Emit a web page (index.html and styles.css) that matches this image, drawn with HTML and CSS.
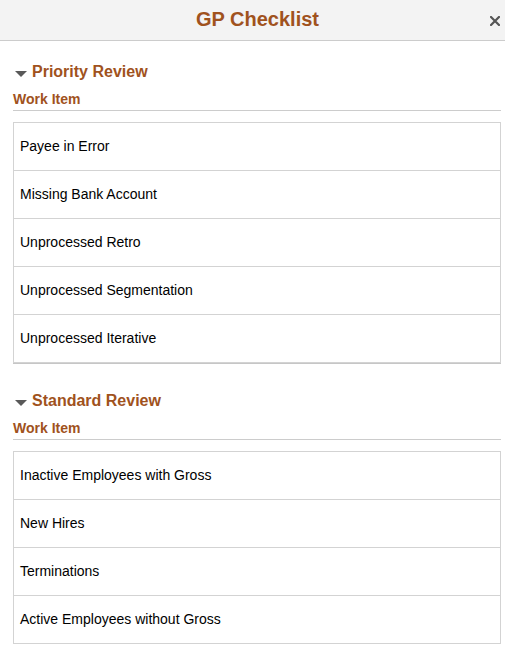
FILE: index.html
```html
<!DOCTYPE html>
<html lang="en">
<head>
<meta charset="utf-8">
<title>GP Checklist</title>
<link rel="stylesheet" href="styles.css">
</head>
<body>
<header class="bar">
  <h1 class="bar-title">GP Checklist</h1>
  <button class="close" aria-label="Close">
    <svg width="10" height="10" viewBox="0 0 10 10"><path d="M1 1 L9 9 M9 1 L1 9" stroke="#555" stroke-width="2.2" stroke-linecap="square" fill="none"/></svg>
  </button>
</header>
<main class="content">
  <section class="group">
    <h2 class="group-head"><svg class="caret" width="12" height="6" viewBox="0 0 12 6"><path d="M0 0 H12 L6 6 Z" fill="#595959"/></svg><span>Priority Review</span></h2>
    <div class="col-head">Work Item</div>
    <ul class="list">
      <li class="row">Payee in Error</li>
      <li class="row">Missing Bank Account</li>
      <li class="row">Unprocessed Retro</li>
      <li class="row">Unprocessed Segmentation</li>
      <li class="row">Unprocessed Iterative</li>
    </ul>
  </section>
  <section class="group group-next">
    <h2 class="group-head"><svg class="caret" width="12" height="6" viewBox="0 0 12 6"><path d="M0 0 H12 L6 6 Z" fill="#595959"/></svg><span>Standard Review</span></h2>
    <div class="col-head">Work Item</div>
    <ul class="list">
      <li class="row">Inactive Employees with Gross</li>
      <li class="row">New Hires</li>
      <li class="row">Terminations</li>
      <li class="row">Active Employees without Gross</li>
    </ul>
  </section>
</main>
</body>
</html>
```
FILE: styles.css
```css
* { box-sizing: border-box; }
html, body {
  margin: 0;
  padding: 0;
  background: #fff;
  font-family: "Liberation Sans", Arial, sans-serif;
  color: #000;
}
.bar {
  display: flex;
  align-items: center;
  height: 41px;
  background: #f3f3f3;
  border-bottom: 1px solid #cccccc;
}
.bar-title {
  flex: 1;
  margin: 0;
  padding-left: 25px;
  text-align: center;
  font-size: 20px;
  font-weight: bold;
  line-height: 38px;
  padding-bottom: 2px;
  color: #a0521d;
}
.close {
  width: 10px;
  height: 10px;
  padding: 0;
  margin: 2px 5px 0 0;
  border: 0;
  background: none;
  display: flex;
}
.content {
  padding: 21px 4px 0 13px;
}
.group-next {
  margin-top: 28px;
}
.group-head {
  display: flex;
  align-items: center;
  gap: 5px;
  margin: 0;
  padding-left: 2px;
  font-size: 16px;
  font-weight: bold;
  line-height: 20px;
  color: #a0521d;
}
.caret {
  margin-top: 4px;
  flex: none;
}
.col-head {
  margin-top: 8px;
  font-size: 14px;
  font-weight: bold;
  line-height: 18px;
  padding-bottom: 2px;
  border-bottom: 1px solid #cccccc;
  color: #a0521d;
}
.list {
  list-style: none;
  margin: 11px 0 0 0;
  padding: 0;
  border: 1px solid #d3d3d3;
  box-shadow: 0 1px 0 #c6c6c6;
}
.row {
  height: 48px;
  padding: 14px 6px 0 6px;
  font-size: 14px;
  line-height: 18px;
  border-bottom: 1px solid #d3d3d3;
}
.row:last-child {
  height: 47px;
  border-bottom: 0;
}
```
